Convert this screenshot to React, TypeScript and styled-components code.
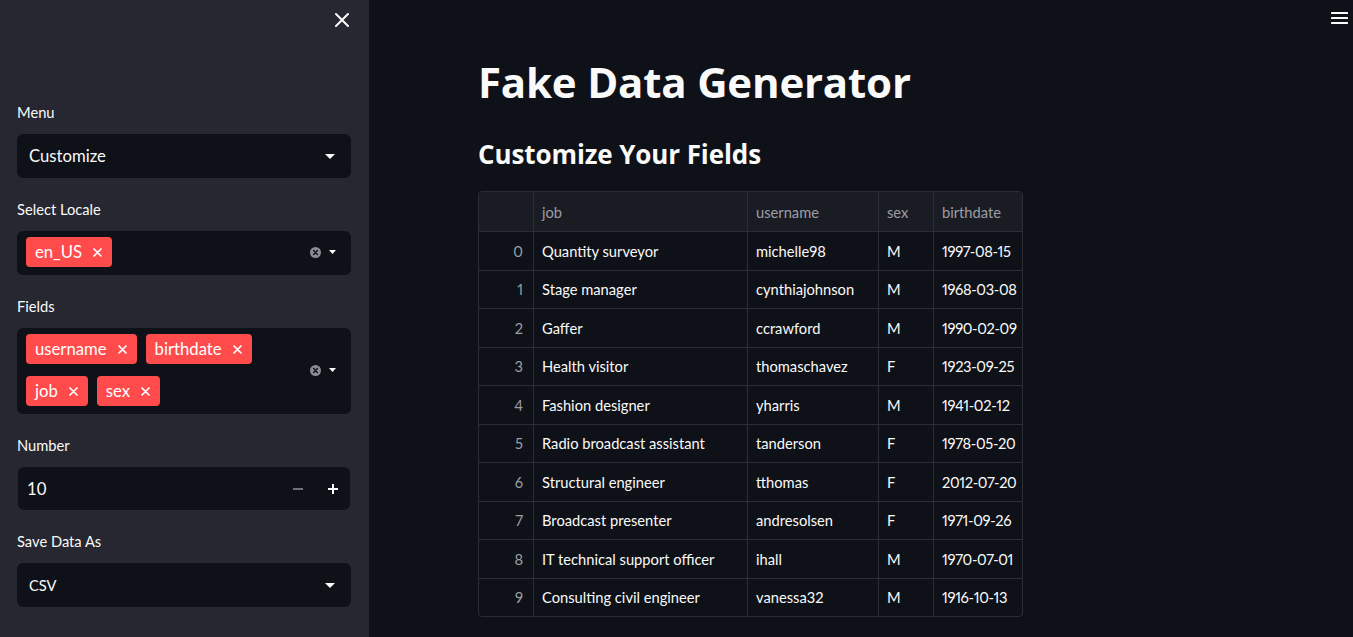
import React from "react";
import styled, { createGlobalStyle } from "styled-components";

const GlobalStyle = createGlobalStyle`
  html, body { margin: 0; padding: 0; background: #0e1117; }
  body {
    font-family: Lato, "Noto Sans", sans-serif;
    color: #fafafa;
    -webkit-font-smoothing: antialiased;
  }
  * { box-sizing: border-box; }
`;

const Page = styled.div`
  display: flex;
  width: 100%;
  height: 637px;
  overflow: hidden;
`;

const Sidebar = styled.aside`
  flex: 0 0 369px;
  background: #262730;
  padding: 0 18px 0 17px;
  display: flex;
  flex-direction: column;
  gap: 20px;
`;

const SidebarTop = styled.div`
  height: 81px;
  display: flex;
  justify-content: flex-end;
  align-items: flex-start;
  padding: 13px 2px 0 0;
`;

const IconButton = styled.button`
  background: none;
  border: none;
  padding: 0;
  margin: 0;
  display: flex;
  align-items: center;
  justify-content: center;
  cursor: pointer;
`;

const Widget = styled.div`
  display: flex;
  flex-direction: column;
`;

const Label = styled.label`
  font-size: 14.7px;
  line-height: 22px;
  margin-bottom: 11px;
  color: #fafafa;
`;

const SelectBox = styled.div`
  height: 44px;
  background: #0e1117;
  border-radius: 6px;
  display: flex;
  align-items: center;
  justify-content: space-between;
  padding: 0 16px 0 12px;
`;

const SelectValue = styled.span<{ $size: number }>`
  font-size: ${(p) => p.$size}px;
  color: #fafafa;
`;

const MultiBox = styled.div`
  min-height: 44px;
  background: #0e1117;
  border-radius: 6px;
  display: flex;
  align-items: center;
  padding: 6px 15px 8px 9px;
`;

const TagList = styled.div`
  flex: 1;
  display: flex;
  flex-wrap: wrap;
  gap: 12px 9px;
  margin-right: 10px;
`;

const Tag = styled.span`
  height: 30px;
  background: #ff4b4b;
  border-radius: 4px;
  display: inline-flex;
  align-items: center;
  gap: 11px;
  padding: 0 10px 0 9px;
  font-size: 16.7px;
  color: #fff;
`;

const MultiIcons = styled.div`
  display: flex;
  align-items: center;
  gap: 8px;
`;

const NumberBox = styled.div`
  height: 43px;
  margin: 0 1px;
  background: #0e1117;
  border-radius: 6px;
  display: flex;
  align-items: center;
  padding-left: 9px;
`;

const NumberValue = styled.span`
  flex: 1;
  font-size: 16.7px;
  color: #fafafa;
`;

const StepButton = styled.button`
  width: 35px;
  height: 100%;
  background: none;
  border: none;
  padding: 0;
  display: flex;
  align-items: center;
  justify-content: center;
`;

const Main = styled.main`
  flex: 1;
  display: flex;
  flex-direction: column;
  min-width: 0;
`;

const TopBar = styled.div`
  height: 36px;
  display: flex;
  justify-content: flex-end;
  padding: 12px 5px 0 0;
`;

const Content = styled.div`
  width: 766px;
  margin: 0 auto;
  padding-top: 20px;
`;

const Title = styled.h1`
  margin: 0;
  font-family: "Open Sans", Lato, sans-serif;
  font-size: 42px;
  line-height: 52px;
  font-weight: 700;
  letter-spacing: -0.2px;
  color: #fafafa;
`;

const Subtitle = styled.h2`
  margin: 31px 0 0;
  font-family: "Open Sans", Lato, sans-serif;
  font-size: 26px;
  line-height: 31px;
  font-weight: 700;
  letter-spacing: -0.1px;
  color: #fafafa;
`;

const TableWrap = styled.div`
  margin-top: 21px;
  width: 545px;
  border: 1px solid #2c2e35;
  border-radius: 4px;
  overflow: hidden;
`;

const Grid = styled.div`
  display: grid;
  grid-template-columns: 55px 214px 131px 55px 88px;
`;

const HeadCell = styled.div<{ $last?: boolean }>`
  height: 39px;
  background: #1a1c24;
  border-right: ${(p) => (p.$last ? "none" : "1px solid #2c2e35")};
  display: flex;
  align-items: center;
  padding: 0 8px;
  font-size: 14.7px;
  color: #9c9ea5;
`;

const Cell = styled.div<{ $last?: boolean; $index?: boolean; $numeric?: boolean }>`
  height: 38.5px;
  border-top: 1px solid #2c2e35;
  border-right: ${(p) => (p.$last ? "none" : "1px solid #2c2e35")};
  display: flex;
  align-items: center;
  justify-content: ${(p) => (p.$index ? "flex-end" : "flex-start")};
  padding: ${(p) => (p.$index ? "0 10px 0 8px" : "0 8px")};
  font-size: 14.7px;
  font-variant-numeric: proportional-nums;
  letter-spacing: ${(p) => (p.$numeric ? "-0.35px" : "normal")};
  color: ${(p) => (p.$index ? "#9c9ea5" : "#fafafa")};
  white-space: nowrap;
`;

const Caret = ({ w = 10, h = 5 }: { w?: number; h?: number }) => (
  <svg width={w} height={h} viewBox={`0 0 ${w} ${h}`}>
    <polygon points={`0,0 ${w},0 ${w / 2},${h}`} fill="#fafafa" />
  </svg>
);

const ClearIcon = () => (
  <svg width="11" height="11" viewBox="0 0 11 11">
    <circle cx="5.5" cy="5.5" r="5.5" fill="#8a8c95" />
    <path d="M3.6 3.6 L7.4 7.4 M7.4 3.6 L3.6 7.4" stroke="#0e1117" strokeWidth="1.4" strokeLinecap="round" />
  </svg>
);

const TagX = () => (
  <svg width="9" height="9" viewBox="0 0 9 9">
    <path d="M1 1 L8 8 M8 1 L1 8" stroke="#fff" strokeWidth="1.7" strokeLinecap="round" />
  </svg>
);

const CloseIcon = () => (
  <svg width="14" height="14" viewBox="0 0 14 14">
    <path d="M1 1 L13 13 M13 1 L1 13" stroke="#fafafa" strokeWidth="2" strokeLinecap="round" />
  </svg>
);

const MinusIcon = () => (
  <svg width="10" height="10" viewBox="0 0 10 10">
    <rect x="0" y="4" width="10" height="2" fill="#6f717a" />
  </svg>
);

const PlusIcon = () => (
  <svg width="10" height="10" viewBox="0 0 10 10">
    <rect x="0" y="4" width="10" height="2" fill="#fafafa" />
    <rect x="4" y="0" width="2" height="10" fill="#fafafa" />
  </svg>
);

const Hamburger = () => (
  <svg width="17" height="12" viewBox="0 0 17 12">
    <rect x="0" y="0" width="17" height="2" rx="0.5" fill="#fafafa" />
    <rect x="0" y="5" width="17" height="2" rx="0.5" fill="#fafafa" />
    <rect x="0" y="10" width="17" height="2" rx="0.5" fill="#fafafa" />
  </svg>
);

const rows = [
  ["Quantity surveyor", "michelle98", "M", "1997-08-15"],
  ["Stage manager", "cynthiajohnson", "M", "1968-03-08"],
  ["Gaffer", "ccrawford", "M", "1990-02-09"],
  ["Health visitor", "thomaschavez", "F", "1923-09-25"],
  ["Fashion designer", "yharris", "M", "1941-02-12"],
  ["Radio broadcast assistant", "tanderson", "F", "1978-05-20"],
  ["Structural engineer", "tthomas", "F", "2012-07-20"],
  ["Broadcast presenter", "andresolsen", "F", "1971-09-26"],
  ["IT technical support officer", "ihall", "M", "1970-07-01"],
  ["Consulting civil engineer", "vanessa32", "M", "1916-10-13"],
];

const headers = ["", "job", "username", "sex", "birthdate"];

export default function App() {
  return (
    <>
      <GlobalStyle />
      <Page>
        <Sidebar>
          <SidebarTop>
            <IconButton aria-label="Close sidebar">
              <CloseIcon />
            </IconButton>
          </SidebarTop>

          <Widget>
            <Label>Menu</Label>
            <SelectBox>
              <SelectValue $size={16.7}>Customize</SelectValue>
              <Caret />
            </SelectBox>
          </Widget>

          <Widget>
            <Label>Select Locale</Label>
            <MultiBox>
              <TagList>
                <Tag>
                  en_US <TagX />
                </Tag>
              </TagList>
              <MultiIcons>
                <ClearIcon />
                <Caret w={7} h={4} />
              </MultiIcons>
            </MultiBox>
          </Widget>

          <Widget>
            <Label>Fields</Label>
            <MultiBox>
              <TagList>
                {["username", "birthdate", "job", "sex"].map((t) => (
                  <Tag key={t}>
                    {t} <TagX />
                  </Tag>
                ))}
              </TagList>
              <MultiIcons>
                <ClearIcon />
                <Caret w={7} h={4} />
              </MultiIcons>
            </MultiBox>
          </Widget>

          <Widget>
            <Label>Number</Label>
            <NumberBox>
              <NumberValue>10</NumberValue>
              <StepButton aria-label="Decrement">
                <MinusIcon />
              </StepButton>
              <StepButton aria-label="Increment">
                <PlusIcon />
              </StepButton>
            </NumberBox>
          </Widget>

          <Widget>
            <Label>Save Data As</Label>
            <SelectBox>
              <SelectValue $size={14.7}>CSV</SelectValue>
              <Caret />
            </SelectBox>
          </Widget>
        </Sidebar>

        <Main>
          <TopBar>
            <Hamburger />
          </TopBar>
          <Content>
            <Title>Fake Data Generator</Title>
            <Subtitle>Customize Your Fields</Subtitle>
            <TableWrap>
              <Grid>
                {headers.map((h, i) => (
                  <HeadCell key={i} $last={i === headers.length - 1}>
                    {h}
                  </HeadCell>
                ))}
                {rows.map((r, ri) => (
                  <React.Fragment key={ri}>
                    <Cell $index>{ri}</Cell>
                    {r.map((v, ci) => (
                      <Cell key={ci} $last={ci === r.length - 1} $numeric={ci === r.length - 1}>
                        {v}
                      </Cell>
                    ))}
                  </React.Fragment>
                ))}
              </Grid>
            </TableWrap>
          </Content>
        </Main>
      </Page>
    </>
  );
}
